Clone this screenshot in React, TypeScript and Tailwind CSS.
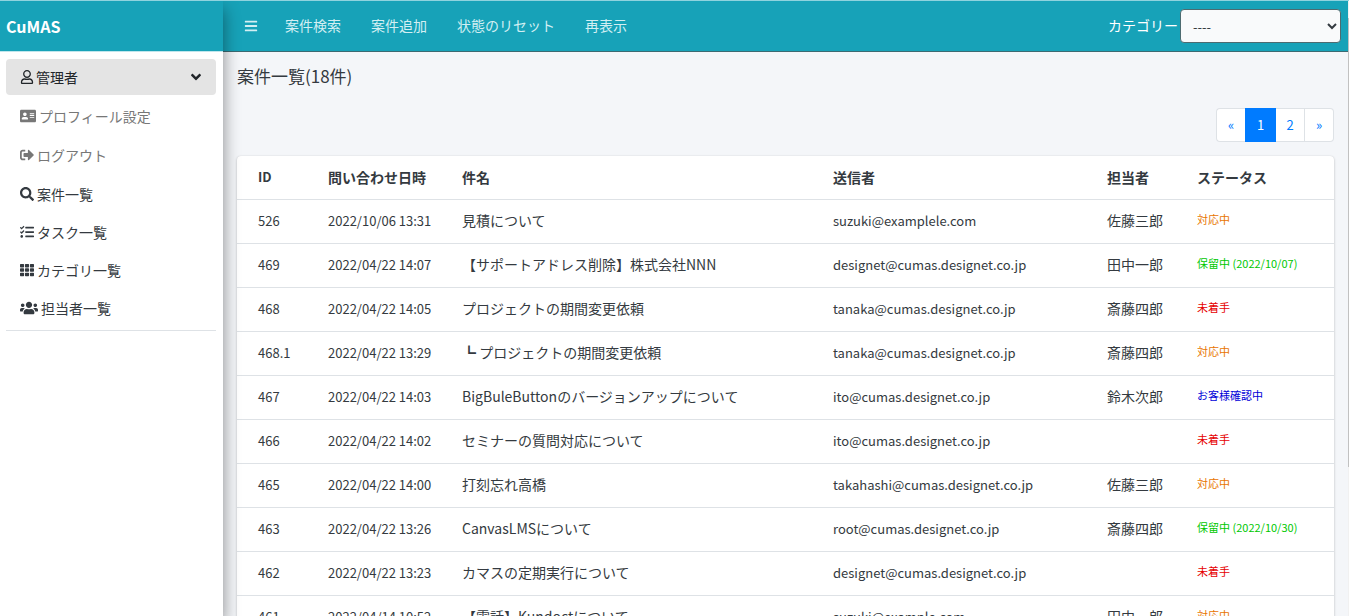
import type { ReactNode } from "react";
import {
  FaRegUser,
  FaAddressCard,
  FaSignOutAlt,
  FaSearch,
  FaTasks,
  FaTh,
  FaUsers,
  FaBars,
  FaAngleDown,
} from "react-icons/fa";

type Status = "active" | "hold" | "todo" | "confirm";

interface Row {
  id: string;
  date: string;
  subject: string;
  sender: string;
  owner: string;
  status: Status;
  until?: string;
}

const statusLabel: Record<Status, string> = {
  active: "対応中",
  hold: "保留中",
  todo: "未着手",
  confirm: "お客様確認中",
};

const statusColor: Record<Status, string> = {
  active: "text-[#e87500]",
  hold: "text-[#00c800]",
  todo: "text-[#e60000]",
  confirm: "text-[#0000d8]",
};

const rows: Row[] = [
  { id: "526", date: "2022/10/06 13:31", subject: "見積について", sender: "suzuki@examplele.com", owner: "佐藤三郎", status: "active" },
  { id: "469", date: "2022/04/22 14:07", subject: "【サポートアドレス削除】株式会社NNN", sender: "designet@cumas.designet.co.jp", owner: "田中一郎", status: "hold", until: "2022/10/07" },
  { id: "468", date: "2022/04/22 14:05", subject: "プロジェクトの期間変更依頼", sender: "tanaka@cumas.designet.co.jp", owner: "斎藤四郎", status: "todo" },
  { id: "468.1", date: "2022/04/22 13:29", subject: "┗ プロジェクトの期間変更依頼", sender: "tanaka@cumas.designet.co.jp", owner: "斎藤四郎", status: "active" },
  { id: "467", date: "2022/04/22 14:03", subject: "BigBuleButtonのバージョンアップについて", sender: "ito@cumas.designet.co.jp", owner: "鈴木次郎", status: "confirm" },
  { id: "466", date: "2022/04/22 14:02", subject: "セミナーの質問対応について", sender: "ito@cumas.designet.co.jp", owner: "", status: "todo" },
  { id: "465", date: "2022/04/22 14:00", subject: "打刻忘れ高橋", sender: "takahashi@cumas.designet.co.jp", owner: "佐藤三郎", status: "active" },
  { id: "463", date: "2022/04/22 13:26", subject: "CanvasLMSについて", sender: "root@cumas.designet.co.jp", owner: "斎藤四郎", status: "hold", until: "2022/10/30" },
  { id: "462", date: "2022/04/22 13:23", subject: "カマスの定期実行について", sender: "designet@cumas.designet.co.jp", owner: "", status: "todo" },
  { id: "461", date: "2022/04/14 10:52", subject: "【電話】Kundoctについて", sender: "suzuki@example.com", owner: "田中一郎", status: "active" },
];

function SideLink({ icon, label, muted = false }: { icon: ReactNode; label: string; muted?: boolean }) {
  return (
    <li>
      <a
        href="#"
        className={`flex items-center gap-[3px] rounded px-[14px] ${muted ? "h-9 text-[#777777]" : "h-[35px] text-[#343a40]"}`}
      >
        {icon}
        <span>{label}</span>
      </a>
    </li>
  );
}

function Sidebar() {
  return (
    <aside className="z-10 flex w-[223px] shrink-0 flex-col bg-white shadow-[0_8px_16px_rgba(0,0,0,0.45)]">
      <a href="#" className="flex h-[51px] items-center border-b border-[#bfe6ec] bg-[#17a2b8] px-1.5 text-base font-bold text-white">
        CuMAS
      </a>
      <nav className="pt-[7px] pr-[7px] pl-1.5">
        <ul className="flex flex-col gap-[3px] border-b border-[#dee2e6] pb-[5px]">
          <li>
            <button type="button" className="flex h-9 w-full items-center gap-[2px] rounded bg-[#e4e4e4] px-[14px] text-[#212529]">
              <FaRegUser className="size-[14px]" />
              <span>管理者</span>
              <FaAngleDown className="-mr-0.5 ml-auto size-4" />
            </button>
          </li>
          <SideLink muted icon={<FaAddressCard className="size-4" />} label="プロフィール設定" />
          <SideLink muted icon={<FaSignOutAlt className="size-[14px]" />} label="ログアウト" />
          <SideLink icon={<FaSearch className="size-[14px]" />} label="案件一覧" />
          <SideLink icon={<FaTasks className="size-[14px]" />} label="タスク一覧" />
          <SideLink icon={<FaTh className="size-[14px]" />} label="カテゴリ一覧" />
          <SideLink icon={<FaUsers className="size-[18px]" />} label="担当者一覧" />
        </ul>
      </nav>
    </aside>
  );
}

function Navbar() {
  return (
    <header className="flex h-[51px] items-center border-b border-[#3c6a72] bg-[#17a2b8] pr-[7px] pl-[21px] text-[#d3eff3]">
      <button type="button" aria-label="メニュー" className="mr-[27px]">
        <FaBars className="size-[14px]" />
      </button>
      <nav className="flex gap-[30px] pb-0.5">
        <a href="#">案件検索</a>
        <a href="#">案件追加</a>
        <a href="#">状態のリセット</a>
        <a href="#">再表示</a>
      </nav>
      <label htmlFor="category" className="ml-auto pb-0.5 text-white">
        カテゴリー
      </label>
      <select
        id="category"
        className="ml-0.5 h-[34px] w-[161px] rounded border border-[#4d6b70] bg-[#f9fafb] px-2 text-[13px] text-[#343a40]"
      >
        <option>----</option>
      </select>
    </header>
  );
}

function Pagination() {
  return (
    <nav aria-label="ページ" className="flex justify-end text-[13px] text-[#007bff]">
      <a href="#" className="flex h-[34px] w-[29px] items-center justify-center rounded-l border border-r-0 border-[#dee2e6] bg-white">«</a>
      <a href="#" aria-current="page" className="flex h-[34px] w-[31px] items-center justify-center bg-[#007bff] text-white">1</a>
      <a href="#" className="flex h-[34px] w-[29px] items-center justify-center border border-l-0 border-[#dee2e6] bg-white">2</a>
      <a href="#" className="flex h-[34px] w-[29px] items-center justify-center rounded-r border border-l-0 border-[#dee2e6] bg-white">»</a>
    </nav>
  );
}

function CaseTable() {
  return (
    <div className="overflow-hidden rounded bg-white shadow-[0_0_1px_rgba(0,0,0,0.13),0_1px_3px_rgba(0,0,0,0.2)]">
      <table className="w-full table-fixed border-collapse text-left">
        <colgroup>
          <col className="w-[81px]" />
          <col className="w-[134px]" />
          <col />
          <col className="w-[274px]" />
          <col className="w-[90px]" />
          <col className="w-[147px]" />
        </colgroup>
        <thead>
          <tr className="h-[43px] border-b border-[#dee2e6]">
            <th className="pl-[21px] text-[13px]">ID</th>
            <th className="pl-2.5">問い合わせ日時</th>
            <th className="pl-2.5">件名</th>
            <th className="pl-2.5">送信者</th>
            <th className="pl-2.5">担当者</th>
            <th className="pl-2.5">ステータス</th>
          </tr>
        </thead>
        <tbody>
          {rows.map((row) => (
            <tr key={row.id} className="h-11 border-b border-[#dee2e6]">
              <td className="pl-[21px] text-[13px]">{row.id}</td>
              <td className="pl-2.5 text-[13px] whitespace-nowrap">{row.date}</td>
              <td className="pb-0.5 pl-2.5 whitespace-nowrap">{row.subject}</td>
              <td className="pl-2.5 text-[13px]">{row.sender}</td>
              <td className="pb-0.5 pl-2.5">{row.owner}</td>
              <td className={`pb-1 pl-2.5 text-[11px] whitespace-nowrap ${statusColor[row.status]}`}>
                {statusLabel[row.status]}
                {row.until && ` (${row.until})`}
              </td>
            </tr>
          ))}
        </tbody>
      </table>
    </div>
  );
}

export default function App() {
  return (
    <div className="flex h-screen overflow-hidden border-t border-[#8fd3de] bg-[#f4f6f9] font-['Noto_Sans_CJK_JP',sans-serif] text-[14px] leading-5 text-[#343a40]">
      <Sidebar />
      <div className="flex min-w-0 flex-1 flex-col">
        <Navbar />
        <main className="min-h-0 flex-1 overflow-hidden pr-[14px] pl-[14px]">
          <h1 className="pt-3 text-[17px] leading-6">案件一覧(18件)</h1>
          <div className="pt-5 pb-[14px]">
            <Pagination />
          </div>
          <CaseTable />
        </main>
      </div>
      <div className="w-px shrink-0 bg-[#f1f1f1] pt-[17px]">
        <div className="h-3/4 bg-[#c1c1c1]" />
      </div>
    </div>
  );
}
